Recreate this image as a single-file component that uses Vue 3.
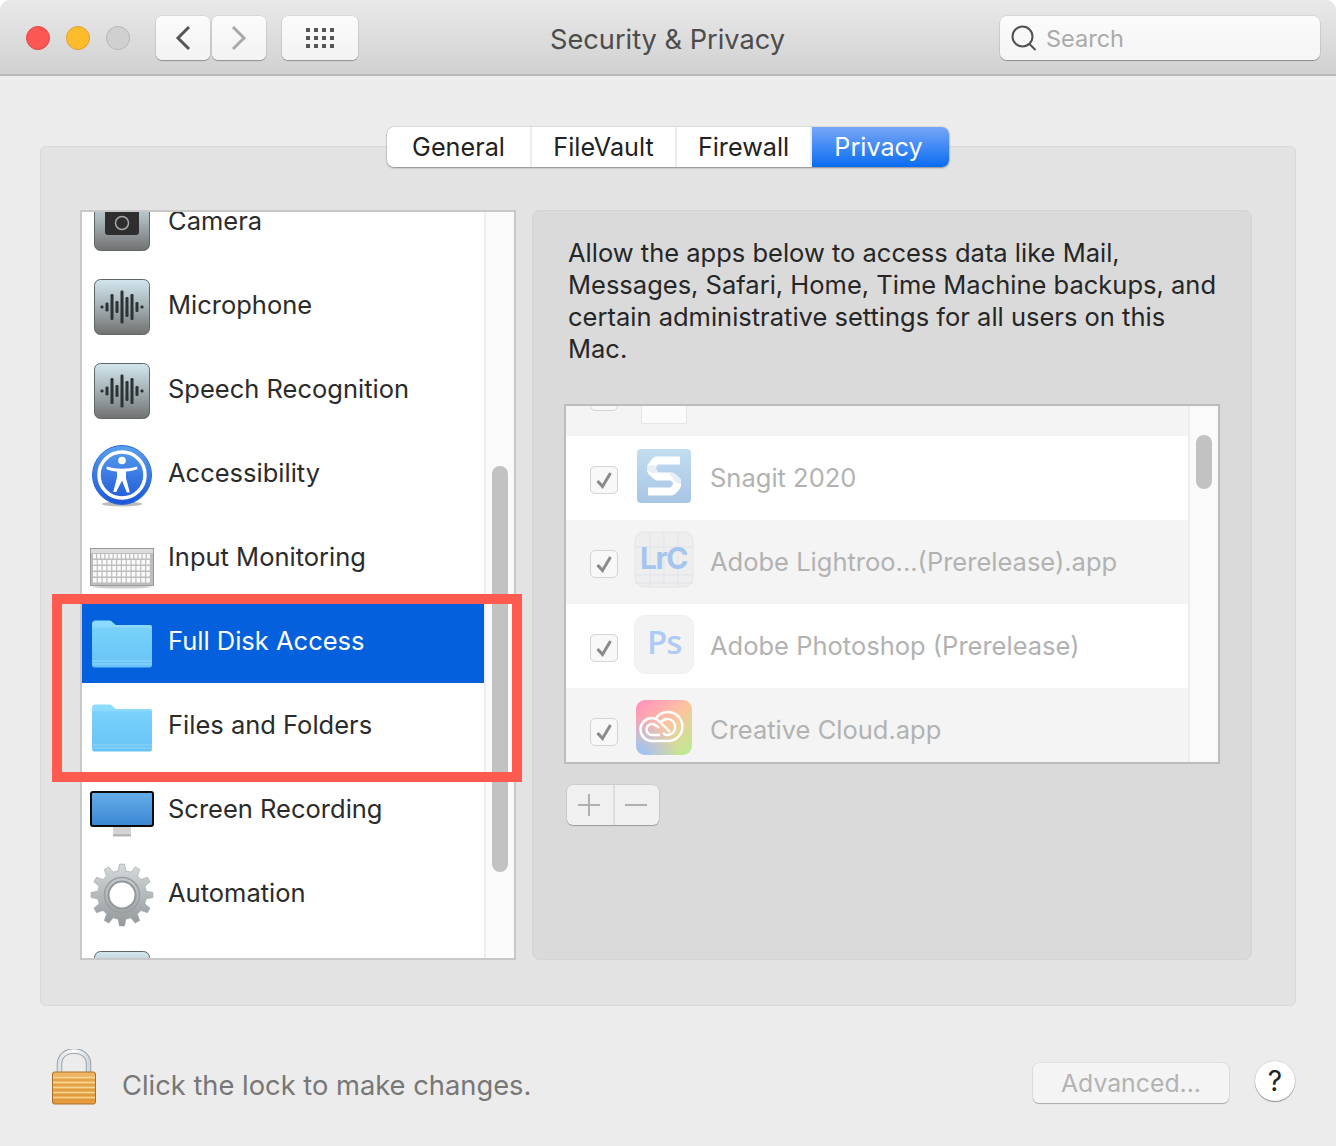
<script setup>
const tabs = [
  { label: 'General', w: 145 },
  { label: 'FileVault', w: 145 },
  { label: 'Firewall', w: 135 },
  { label: 'Privacy', w: 137, active: true }
]
const rows = [
  { id: 1, label: 'Camera', icon: 'camera' },
  { id: 2, label: 'Microphone', icon: 'wave' },
  { id: 3, label: 'Speech Recognition', icon: 'wave' },
  { id: 4, label: 'Accessibility', icon: 'access' },
  { id: 5, label: 'Input Monitoring', icon: 'keyboard' },
  { id: 6, label: 'Full Disk Access', icon: 'folder', selected: true },
  { id: 7, label: 'Files and Folders', icon: 'folder' },
  { id: 8, label: 'Screen Recording', icon: 'screen' },
  { id: 9, label: 'Automation', icon: 'gear' },
  { id: 10, label: '', icon: 'wave' }
]
const apps = [
  { label: 'Snagit 2020', icon: 'snagit' },
  { label: 'Adobe Lightroo...(Prerelease).app', icon: 'lrc', alt: true },
  { label: 'Adobe Photoshop (Prerelease)', icon: 'ps' },
  { label: 'Creative Cloud.app', icon: 'cc', alt: true }
]
const bars = [
  [8, 3], [13, 9], [18, 26], [23, 12], [28, 33], [33, 20], [38, 26], [43, 10], [48, 3]
]
const gridDots = []
for (let y = 0; y < 3; y++) for (let x = 0; x < 4; x++) gridDots.push({ x: x * 8, y: y * 8 })

const keys = []
for (let r = 0; r < 5; r++) {
  const n = r === 0 ? 14 : 12
  for (let c = 0; c < n; c++) keys.push({ x: 3 + c * (58 / n), y: 27 + r * 6, w: 58 / n - 1.2 })
}

function gearPath() {
  const t = 12
  const cx = 32, cy = 32
  let d = ''
  for (let i = 0; i < t; i++) {
    const a = (i / t) * Math.PI * 2
    const s = Math.PI / t
    const pts = [
      [24.5, a - s * 0.6], [31, a - s * 0.32], [31, a + s * 0.32], [24.5, a + s * 0.6]
    ]
    for (const [r, an] of pts) {
      d += (d ? 'L' : 'M') + (cx + r * Math.cos(an)).toFixed(2) + ' ' + (cy + r * Math.sin(an)).toFixed(2)
    }
  }
  return d + 'Z'
}
const gear = gearPath()
</script>

<template>
  <div class="window">
    <svg class="defs" aria-hidden="true">
      <defs>
        <linearGradient id="tile" x1="0" y1="0" x2="0" y2="1">
          <stop offset="0" stop-color="#d2e6ee" />
          <stop offset="0.45" stop-color="#a9b6ba" />
          <stop offset="1" stop-color="#717171" />
        </linearGradient>
        <linearGradient id="blueDisc" x1="0" y1="0" x2="0" y2="1">
          <stop offset="0" stop-color="#5aa0ee" />
          <stop offset="1" stop-color="#1c55d8" />
        </linearGradient>
        <linearGradient id="screen" x1="0" y1="0" x2="0" y2="1">
          <stop offset="0" stop-color="#66aeea" />
          <stop offset="1" stop-color="#3a86d2" />
        </linearGradient>
        <linearGradient id="steel" x1="0" y1="0" x2="0" y2="1">
          <stop offset="0" stop-color="#d5dadc" />
          <stop offset="1" stop-color="#93989a" />
        </linearGradient>
        <linearGradient id="snag" x1="0" y1="0" x2="0" y2="1">
          <stop offset="0" stop-color="#c2ddf0" />
          <stop offset="1" stop-color="#a8c5e5" />
        </linearGradient>
        <linearGradient id="ccA" x1="0" y1="0" x2="1" y2="1">
          <stop offset="0" stop-color="#ff8cc2" />
          <stop offset="0.5" stop-color="#fdc49e" />
          <stop offset="1" stop-color="#b4ef90" />
        </linearGradient>
        <radialGradient id="ccB" cx="0.05" cy="1" r="0.7">
          <stop offset="0" stop-color="#93c3ff" />
          <stop offset="1" stop-color="#93c3ff" stop-opacity="0" />
        </radialGradient>
        <linearGradient id="brass" x1="0" y1="0" x2="0" y2="1">
          <stop offset="0" stop-color="#efb765" />
          <stop offset="1" stop-color="#e59a3c" />
        </linearGradient>
        <linearGradient id="shackle" x1="0" y1="0" x2="1" y2="0">
          <stop offset="0" stop-color="#dfe3e6" />
          <stop offset="0.5" stop-color="#ffffff" />
          <stop offset="1" stop-color="#d3d8dc" />
        </linearGradient>
        <linearGradient id="folderBack" x1="0" y1="0" x2="0" y2="1">
          <stop offset="0" stop-color="#8fdcfd" />
          <stop offset="1" stop-color="#72cdf9" />
        </linearGradient>
        <linearGradient id="folderFront" x1="0" y1="0" x2="0" y2="1">
          <stop offset="0" stop-color="#79d2fb" />
          <stop offset="1" stop-color="#67c3f6" />
        </linearGradient>
      </defs>
    </svg>

    <header class="titlebar">
      <div class="lights">
        <span class="light red"></span>
        <span class="light yellow"></span>
        <span class="light off"></span>
      </div>
      <div class="nav">
        <button class="tool nav-btn">
          <svg width="18" height="26" viewBox="0 0 18 26"><path d="M15 2 4 13l11 11" fill="none" stroke="#555" stroke-width="3" /></svg>
        </button>
        <button class="tool nav-btn">
          <svg width="18" height="26" viewBox="0 0 18 26"><path d="m3 2 11 11L3 24" fill="none" stroke="#a9a9a9" stroke-width="3" /></svg>
        </button>
      </div>
      <button class="tool grid-btn">
        <svg width="30" height="22" viewBox="0 0 30 22">
          <rect v-for="(d, i) in gridDots" :key="i" :x="d.x + 1" :y="d.y + 1" width="4" height="4" fill="#555" />
        </svg>
      </button>
      <h1 class="title">Security &amp; Privacy</h1>
      <div class="search">
        <svg width="28" height="28" viewBox="0 0 28 28">
          <circle cx="12.500" cy="12.500" r="10" fill="none" stroke="#505050" stroke-width="2" />
          <path d="m19.500 20 6 6" stroke="#505050" stroke-width="2" />
        </svg>
        <span class="placeholder">Search</span>
      </div>
    </header>

    <main class="tabbox">
      <div class="tabs">
        <div
          v-for="t in tabs"
          :key="t.label"
          class="tab"
          :class="{ active: t.active }"
          :style="{ width: t.w + 'px' }"
        >{{ t.label }}</div>
      </div>

      <div class="panes">
        <section class="list">
          <div class="list-scroll">
            <div
              v-for="r in rows"
              :key="r.id"
              class="row"
              :class="{ selected: r.selected }"
            >
              <svg class="row-icon" width="64" height="64" viewBox="0 0 64 64">
                <template v-if="r.icon === 'camera'">
                  <rect x="4.500" y="4.500" width="55" height="55" rx="6" fill="url(#tile)" stroke="#5f6668" />
                  <rect x="15" y="18" width="34" height="26" rx="3" fill="#2e2e2e" />
                  <circle cx="32" cy="32" r="6.500" fill="none" stroke="#a8a8a8" stroke-width="1.500" />
                </template>
                <template v-else-if="r.icon === 'wave'">
                  <rect x="4.500" y="4.500" width="55" height="55" rx="6" fill="url(#tile)" stroke="#5f6668" />
                  <rect
                    v-for="b in bars"
                    :key="b[0]"
                    :x="b[0] + 2.500"
                    :y="32 - b[1] / 2"
                    width="3"
                    :height="b[1]"
                    rx="1.200"
                    fill="#2d3234"
                  />
                </template>
                <template v-else-if="r.icon === 'access'">
                  <ellipse cx="32" cy="61" rx="20" ry="2.500" fill="#bbb" />
                  <circle cx="32" cy="32" r="29.500" fill="url(#blueDisc)" stroke="#2a6bd8" />
                  <circle cx="32" cy="32" r="23" fill="none" stroke="#fff" stroke-width="3.500" />
                  <circle cx="32" cy="17.500" r="3.800" fill="#fff" />
                  <path d="M17 23.500c5 1.600 10 2.200 15 2.200s10-.6 15-2.200l.6 2.400c-3.800 1.400-7.600 2.200-11.600 2.600v6.600l3.800 14.400h-3L32 37.500 26.200 49h-3L27 34.500v-6C23 28.100 19.200 27.300 16.400 25.900z" fill="#fff" />
                </template>
                <template v-else-if="r.icon === 'keyboard'">
                  <ellipse cx="32" cy="60" rx="30" ry="1.500" fill="#ccc" />
                  <rect x="0.500" y="21.500" width="63" height="37" fill="#bdbdbd" stroke="#9a9a9a" />
                  <rect x="1" y="22" width="62" height="4" fill="#dcdcdc" />
                  <rect v-for="(k, i) in keys" :key="i" :x="k.x" :y="k.y" :width="k.w" height="4.500" fill="#fafafa" />
                </template>
                <template v-else-if="r.icon === 'folder'">
                  <path d="M2 13c0-2 1.300-3.500 3.300-3.500h14c1.600 0 2.500.8 3.700 2.200L26 14h34c1.300 0 2 .9 2 2.200V50H2z" fill="url(#folderBack)" />
                  <path d="M2 16.500h60V54c0 1.500-.9 2.500-2.400 2.500H4.400C2.900 56.500 2 55.500 2 54z" fill="url(#folderFront)" />
                  <path d="M2 50h60M2 53h60" stroke="#9fdcfb" stroke-width="1" opacity="0.8" />
                </template>
                <template v-else-if="r.icon === 'screen'">
                  <path d="M23 48h18v6H23z" fill="#d2d2d2" />
                  <path d="M23 54.500h18v3H23z" fill="#b5b5b5" />
                  <rect x="1" y="13" width="62" height="34" rx="2" fill="url(#screen)" stroke="#0a0a0a" stroke-width="2" />
                </template>
                <template v-else-if="r.icon === 'gear'">
                  <path :d="gear" fill="url(#steel)" stroke="#9a9fa1" stroke-width="0.600" />
                  <circle cx="32" cy="32" r="17.500" fill="none" stroke="#9a9fa1" stroke-width="1.500" />
                  <circle cx="32" cy="32" r="13.500" fill="#fff" stroke="#93989a" stroke-width="2" />
                </template>
              </svg>
              <span v-if="r.label" class="row-label">{{ r.label }}</span>
            </div>
          </div>
          <div class="track list-track"><span class="thumb list-thumb"></span></div>
        </section>

        <section class="detail">
          <p class="blurb">Allow the apps below to access data like Mail, Messages, Safari, Home, Time Machine backups, and certain administrative settings for all users on this Mac.</p>
          <div class="apps">
            <div class="apps-scroll">
              <div class="app app-cut alt">
                <span class="check cut-check"></span>
                <span class="cut-icon"></span>
              </div>
              <div v-for="a in apps" :key="a.label" class="app" :class="{ alt: a.alt }">
                <span class="check">
                  <svg width="20" height="20" viewBox="0 0 20 20"><path d="m3.500 11 5 5.500L16.500 3" fill="none" stroke="#8a8a8a" stroke-width="3" /></svg>
                </span>
                <svg class="app-icon" width="60" height="60" viewBox="0 0 60 60">
                  <template v-if="a.icon === 'snagit'">
                    <rect x="3" y="2" width="54" height="54" rx="4" fill="url(#snag)" />
                    <path d="M46 13.500H22l-5 6.500v4l6 5.500h15l5 4.500v5l-5 5.500H14" fill="none" stroke="#fff" stroke-width="8" stroke-linejoin="bevel" />
                    <path d="M13 19l8-1 3 8h-6l-5-3zM35 26h5l7 6v5l-6-2z" fill="#e6eff8" />
                  </template>
                  <template v-else-if="a.icon === 'lrc'">
                    <rect x="1" y="1" width="58" height="55" rx="9" fill="#eeeeee" stroke="#e4e4e4" />
                    <path d="M16 1v55M30 1v55M44 1v55M1 16h58M1 44h58M1 52h58" stroke="#dfe4ea" stroke-width="1" />
                    <text x="6" y="38" class="lrc-text">LrC</text>
                  </template>
                  <template v-else-if="a.icon === 'ps'">
                    <rect x="0.500" y="0.500" width="59" height="58" rx="11" fill="#f3f3f3" stroke="#eeeeee" />
                    <text x="13" y="39" class="ps-text">Ps</text>
                  </template>
                  <template v-else>
                    <rect x="2" y="1" width="56" height="55" rx="9" fill="url(#ccA)" />
                    <rect x="2" y="1" width="56" height="55" rx="9" fill="url(#ccB)" />
                    <g fill="none" stroke="#fff" stroke-width="2.400">
                      <path d="M18 42H34A14.500 14.500 0 1 0 21 21" />
                      <path d="M18 42A11.500 11.500 0 1 1 18 19C23 19 26 23 29 26L36 33" />
                      <path d="M26 36H18A5.500 5.500 0 0 1 18 25C21 25 23 27 25 29" />
                      <path d="M29 34 32 36H34A8 8 0 1 0 27 23" />
                    </g>
                  </template>
                </svg>
                <span class="app-label">{{ a.label }}</span>
              </div>
            </div>
            <div class="track app-track"><span class="thumb app-thumb"></span></div>
          </div>
          <div class="addremove">
            <button class="seg">
              <svg width="22" height="22" viewBox="0 0 22 22"><path d="M11 0v22M0 11h22" stroke="#b0b0b0" stroke-width="2" /></svg>
            </button>
            <button class="seg">
              <svg width="22" height="22" viewBox="0 0 22 22"><path d="M0 11h22" stroke="#b0b0b0" stroke-width="2" /></svg>
            </button>
          </div>
        </section>
      </div>
    </main>

    <footer class="footer">
      <svg class="lock" width="44" height="56" viewBox="0 0 44 56">
        <path d="M7.500 24V15C7.500 7 14 2 22 2s14.500 5 14.500 13v9" fill="none" stroke="#9aa3ab" stroke-width="5.500" />
        <path d="M7.500 24V15C7.500 7 14 2 22 2s14.500 5 14.500 13v9" fill="none" stroke="url(#shackle)" stroke-width="3.500" />
        <rect x="0.500" y="23" width="43" height="32" rx="2" fill="url(#brass)" stroke="#a9702a" />
        <path d="M1 28.500h42M1 33.500h42M1 38.500h42M1 43.500h42M1 48.500h42" stroke="#f7d591" stroke-width="1.600" />
        <path d="M1 31h42M1 36h42M1 41h42M1 46h42M1 51h42" stroke="#d78f33" stroke-width="0.800" />
      </svg>
      <span class="lock-text">Click the lock to make changes.</span>
      <button class="advanced">Advanced...</button>
      <button class="help">?</button>
    </footer>

    <div class="callout"></div>
  </div>
</template>

<style>
html, body { margin: 0; background: #fff; }
</style>

<style scoped>
.window {
  position: relative;
  width: 1336px;
  height: 1146px;
  overflow: hidden;
  background: #ececec;
  border-radius: 10px 10px 0 0;
  font-family: Inter, "Liberation Sans", sans-serif;
  font-size: 26px;
  color: #2a2a2a;
}
.defs { position: absolute; width: 0; height: 0; }
button { font-family: inherit; padding: 0; margin: 0; cursor: default; }

.titlebar {
  box-sizing: border-box;
  height: 76px;
  display: flex;
  align-items: center;
  padding: 2px 0 0 26px;
  background: linear-gradient(#e9e9e9, #d1d1d1);
  border-bottom: 2px solid #b7b7b7;
}
.lights { display: flex; gap: 16px; }
.light {
  box-sizing: border-box;
  width: 24px;
  height: 24px;
  border-radius: 50%;
  border: 1px solid transparent;
}
.red { background: #fc5753; border-color: #df4744; }
.yellow { background: #fdbc2c; border-color: #dea034; }
.off { background: #d0d0d0; border-color: #b6b6b6; }
.nav { display: flex; gap: 2px; margin-left: 26px; }
.tool {
  box-sizing: border-box;
  height: 44px;
  display: flex;
  align-items: center;
  justify-content: center;
  border: 0;
  border-radius: 6px;
  background: linear-gradient(#fbfbfb, #f3f3f3);
  box-shadow: 0 1px 1px rgba(0, 0, 0, 0.3), 0 0 0 0.5px rgba(0, 0, 0, 0.1);
}
.nav-btn { width: 54px; }
.grid-btn { width: 76px; margin-left: 16px; }
.title {
  width: 234px;
  margin: 0 0 0 192px;
  padding-top: 2px;
  font-size: 27.200px;
  font-weight: 400;
  white-space: nowrap;
  color: #4c4c4c;
  text-align: center;
}
.search {
  box-sizing: border-box;
  width: 320px;
  height: 44px;
  margin-left: 216px;
  padding-left: 10px;
  display: flex;
  align-items: center;
  gap: 8px;
  border-radius: 7px;
  background: linear-gradient(#fbfbfb, #f5f5f5);
  box-shadow: 0 1px 1px rgba(0, 0, 0, 0.3), 0 0 0 0.5px rgba(0, 0, 0, 0.12);
}
.placeholder { color: #aaa; font-size: 23.500px; }

.tabbox {
  box-sizing: border-box;
  width: 1256px;
  height: 860px;
  margin: 70px 0 0 40px;
  background: #e3e3e3;
  border: 1px solid #d9d9d9;
  border-radius: 6px;
}
.tabs {
  width: 562px;
  height: 40px;
  margin: -20px auto 0;
  display: flex;
  border-radius: 7px;
  background: #fff;
  box-shadow: 0 1px 2px rgba(0, 0, 0, 0.35), 0 0 0 0.5px rgba(0, 0, 0, 0.12);
}
.tab {
  display: flex;
  align-items: center;
  justify-content: center;
  padding-bottom: 1px;
  border-right: 2px solid #ececec;
  box-sizing: border-box;
  color: #222;
  font-size: 25.200px;
}
.tab.active {
  border-right: 0;
  padding-right: 4px;
  border-radius: 0 7px 7px 0;
  color: #fff;
  background: linear-gradient(#77a6f8, #0a6cf1);
}
.panes {
  display: flex;
  gap: 16px;
  margin: 43px 0 0 39px;
}

.list {
  box-sizing: border-box;
  width: 436px;
  height: 750px;
  display: flex;
  overflow: hidden;
  background: #fff;
  border: 2px solid #c8c8c8;
}
.list-scroll {
  width: 402px;
  flex: none;
  margin-top: -33px;
}
.row {
  height: 84px;
  padding-left: 8px;
  display: flex;
  align-items: center;
  gap: 14px;
  color: #2b2b2b;
}
.row.selected {
  background: #0560dd;
  color: #fff;
}
.row-icon { flex: none; margin-top: 4px; }
.row-label { font-size: 25.500px; white-space: nowrap; margin-top: -2px; }
.track {
  box-sizing: border-box;
  flex: none;
  width: 30px;
  display: flex;
  justify-content: center;
  background: #fafafa;
  border-left: 2px solid #eeeeee;
}
.thumb { width: 16px; border-radius: 8px; background: #c2c2c2; }
.list-thumb { height: 406px; margin-top: 254px; }

.detail {
  box-sizing: border-box;
  width: 720px;
  height: 750px;
  padding: 26px 31px 0 31px;
  background: #dadada;
  border: 1px solid #d4d4d4;
  border-radius: 8px;
}
.blurb {
  width: 650px;
  margin: 0 0 0 4px;
  font-size: 25.500px;
  line-height: 32px;
  color: #262626;
}
.apps {
  box-sizing: border-box;
  width: 656px;
  height: 360px;
  margin-top: 39px;
  display: flex;
  overflow: hidden;
  background: #f4f4f4;
  border: 2px solid #bcbcbc;
}
.apps-scroll { width: 622px; flex: none; }
.app {
  height: 84px;
  display: flex;
  align-items: center;
  background: #fff;
  padding-left: 24px;
  position: relative;
}
.app.alt { background: #f4f4f4; }
.app-cut {
  height: 30px;
  align-items: flex-end;
}
.check {
  box-sizing: border-box;
  width: 28px;
  height: 28px;
  flex: none;
  display: flex;
  align-items: center;
  justify-content: center;
  margin-top: 4px;
  border: 1px solid #d4d4d4;
  border-radius: 5px;
  background: #f8f8f8;
}
.cut-check { margin-bottom: 25px; }
.cut-icon {
  box-sizing: border-box;
  width: 46px;
  height: 46px;
  margin: 0 0 12px 23px;
  background: #fbfbfb;
  border: 1px solid #e6e6e6;
  flex: none;
}
.app-icon { flex: none; margin-left: 16px; margin-right: 16px; margin-top: -3px; }
.app-label { font-size: 25.500px; color: #b2b2b2; white-space: nowrap; margin-top: -2px; }
.lrc-text { font: 700 30px Inter, sans-serif; letter-spacing: -1.500px; fill: #a4c5ee; }
.ps-text { font: 600 33px "Open Sans", sans-serif; letter-spacing: -1px; fill: #adcbf3; }
.app-thumb { height: 54px; margin-top: 29px; }
.addremove {
  display: flex;
  width: 92px;
  height: 40px;
  margin: 21px 0 0 3px;
  border-radius: 6px;
  background: #f0f0f0;
  box-shadow: 0 1px 1px rgba(0, 0, 0, 0.25), 0 0 0 0.5px rgba(0, 0, 0, 0.1);
}
.seg {
  box-sizing: border-box;
  width: 46px;
  flex: none;
  padding-right: 2px;
  display: flex;
  align-items: center;
  justify-content: center;
  border: 0;
  background: transparent;
}
.seg + .seg { border-left: 2px solid #dedede; }

.footer {
  display: flex;
  align-items: flex-start;
  padding-left: 52px;
}
.lock { flex: none; margin-top: 43px; display: block; }
.lock-text {
  margin: 63px 0 0 26px;
  width: 911px;
  flex: none;
  font-size: 27.300px;
  color: #777;
  white-space: nowrap;
}
.advanced {
  box-sizing: border-box;
  width: 196px;
  height: 40px;
  margin-top: 57px;
  padding-bottom: 1px;
  border: 0;
  border-radius: 6px;
  background: #f4f4f4;
  color: #b3b3b3;
  font-size: 24.800px;
  box-shadow: 0 1px 1px rgba(0, 0, 0, 0.25), 0 0 0 0.5px rgba(0, 0, 0, 0.1);
}
.help {
  box-sizing: border-box;
  width: 40px;
  height: 40px;
  margin: 55px 0 0 26px;
  border: 0;
  border-radius: 50%;
  background: #fff;
  color: #222;
  font-size: 28px;
  box-shadow: 0 1px 1px rgba(0, 0, 0, 0.35), 0 0 0 0.5px rgba(0, 0, 0, 0.15);
}

.callout {
  box-sizing: border-box;
  position: absolute;
  left: 52px;
  top: 594px;
  width: 470px;
  height: 188px;
  border: 10px solid #ff5a4f;
}
</style>
